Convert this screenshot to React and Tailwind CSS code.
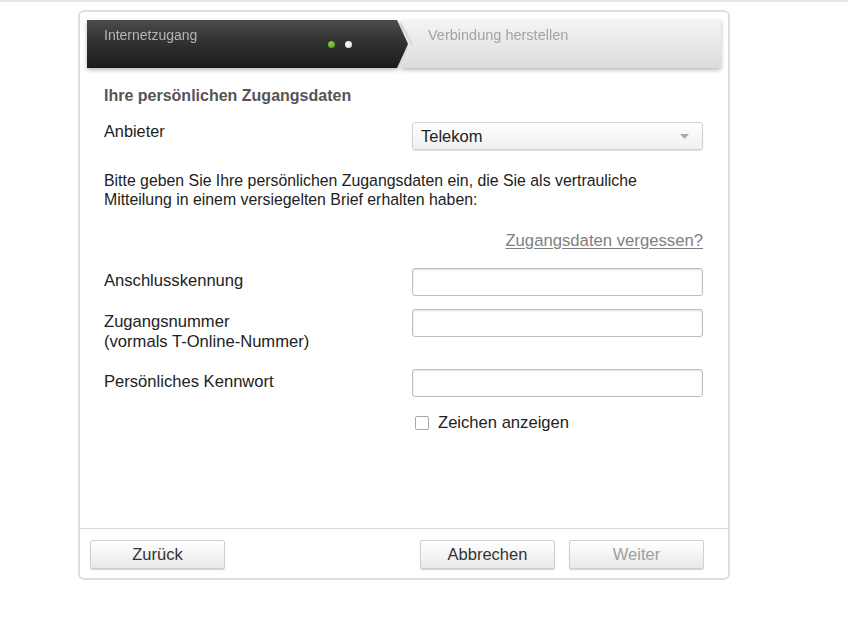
import React from "react";

const font = { fontFamily: '"Liberation Sans", Arial, Helvetica, sans-serif' };

function Btn({ children, disabled, className = "" }) {
  return (
    <button
      className={`h-[29px] w-[135px] rounded-[2px] border border-[#cfcfcf] bg-gradient-to-b from-[#ffffff] to-[#e9e9e9] shadow-[0_1px_1px_rgba(0,0,0,0.18)] text-[16.5px] ${disabled ? "text-[#a0a0a0]" : "text-[#333]"} ${className}`}
    >
      {children}
    </button>
  );
}

function Input() {
  return (
    <div className="h-[28px] w-[291px] shrink-0 rounded-[3px] border border-[#bdbdbd] bg-white shadow-[inset_0_1px_2px_rgba(0,0,0,0.12)]" />
  );
}

export default function App() {
  return (
    <div style={font} className="min-h-[617px] w-[848px] bg-white">
      <div className="h-[2px] w-full bg-[#e6e6e6]" />
      <div className="ml-[78px] mt-[8px] flex h-[570px] w-[652px] flex-col rounded-[6px] border-2 border-[#dedede] bg-white">
        {/* Step header */}
        <div className="mx-[7px] mt-[8px] flex h-[48px] drop-shadow-[0_2px_2px_rgba(0,0,0,0.28)]">
          <div className="relative h-full w-[321px] bg-gradient-to-b from-[#4c4c4c] via-[#2f2f2f] to-[#1c1c1c] [clip-path:polygon(0_0,310px_0,100%_50%,310px_100%,0_100%)]">
            <span className="absolute left-[17px] top-[5px] text-[14px] text-[#b4b4b4]">Internetzugang</span>
            <span className="absolute left-[241px] top-[21px] h-[7px] w-[7px] rounded-full bg-[radial-gradient(circle_at_40%_35%,#8fd14a,#4c8f12)]" />
            <span className="absolute left-[258px] top-[21px] h-[7px] w-[7px] rounded-full bg-[radial-gradient(circle_at_40%_35%,#ffffff,#d6d6d6)]" />
          </div>
          <div className="relative -ml-[8px] h-full flex-1 bg-gradient-to-b from-[#f4f4f4] to-[#dcdcdc] [clip-path:polygon(0_0,100%_0,100%_100%,0_100%,13px_50%)]">
            <span className="absolute left-[28px] top-[5px] text-[14.5px] text-[#a3a3a3]">Verbindung herstellen</span>
          </div>
        </div>

        {/* Content */}
        <div className="pl-[24px] pr-[25px]">
          <div className="mt-[19px] text-[16px] font-bold leading-[18px] text-[#555]">Ihre persönlichen Zugangsdaten</div>

          <div className="mt-[17px] flex justify-between">
            <div className="text-[16.3px] leading-[18px] text-[#222]">Anbieter</div>
            <div className="relative flex h-[28px] w-[291px] items-center rounded-[3px] border border-[#d0d0d0] bg-gradient-to-b from-[#ffffff] to-[#f0f0f0] pl-[8px] shadow-[0_1px_1px_rgba(0,0,0,0.12)]">
              <span className="text-[16.5px] text-[#222]">Telekom</span>
              <svg className="absolute right-[13px] top-[11px]" width="9" height="5" viewBox="0 0 9 5">
                <polygon points="0,0 9,0 4.5,5" fill="#a9a9a9" />
              </svg>
            </div>
          </div>

          <p className="mt-[21px] text-[15.85px] leading-[19px] text-[#222]">
            Bitte geben Sie Ihre persönlichen Zugangsdaten ein, die Sie als vertrauliche
            <br />
            Mitteilung in einem versiegelten Brief erhalten haben:
          </p>

          <div className="mt-[23px] flex justify-end">
            <span className="text-[16.7px] leading-[18px] text-[#808080] underline underline-offset-[2px]">Zugangsdaten vergessen?</span>
          </div>

          <div className="mt-[18px] flex justify-between">
            <div className="pt-[4px] text-[16.6px] leading-[18px] text-[#222]">Anschlusskennung</div>
            <Input />
          </div>

          <div className="mt-[13px] flex justify-between">
            <div className="pt-[3px] text-[16.6px] leading-[20px] text-[#222]">
              Zugangsnummer
              <br />
              (vormals T-Online-Nummer)
            </div>
            <Input />
          </div>

          <div className="mt-[17px] flex justify-between">
            <div className="pt-[4px] text-[16.6px] leading-[18px] text-[#222]">Persönliches Kennwort</div>
            <Input />
          </div>

          <div className="mt-[17px] flex">
            <div className="ml-auto flex w-[291px] items-center gap-[9px] pl-[3px]">
              <span className="h-[14px] w-[14px] rounded-[2px] border border-[#a8a8a8] bg-white" />
              <span className="text-[16.6px] leading-[18px] text-[#222]">Zeichen anzeigen</span>
            </div>
          </div>
        </div>

        {/* Footer */}
        <div className="mt-auto flex items-center border-t border-[#d8d8d8] pb-[9px] pl-[10px] pr-[24px] pt-[11px]">
          <Btn>Zurück</Btn>
          <Btn className="ml-auto">Abbrechen</Btn>
          <Btn disabled className="ml-[14px]">Weiter</Btn>
        </div>
      </div>
    </div>
  );
}
